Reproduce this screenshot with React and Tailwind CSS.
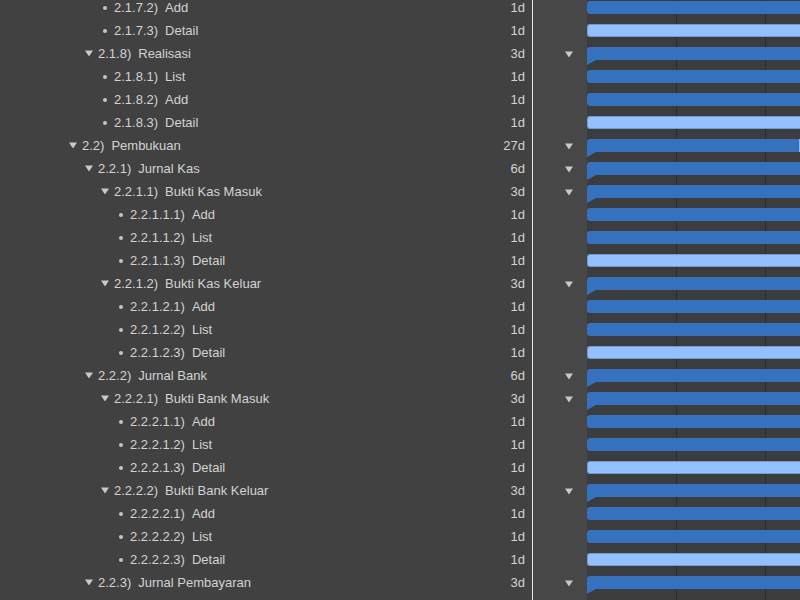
import React from 'react';

const rows = [
  { d: 3, kind: 'leaf', num: '2.1.7.2)', name: 'Add', dur: '1d' },
  { d: 3, kind: 'leaf', num: '2.1.7.3)', name: 'Detail', dur: '1d', light: true },
  { d: 2, kind: 'group', num: '2.1.8)', name: 'Realisasi', dur: '3d' },
  { d: 3, kind: 'leaf', num: '2.1.8.1)', name: 'List', dur: '1d' },
  { d: 3, kind: 'leaf', num: '2.1.8.2)', name: 'Add', dur: '1d' },
  { d: 3, kind: 'leaf', num: '2.1.8.3)', name: 'Detail', dur: '1d', light: true },
  { d: 1, kind: 'group', num: '2.2)', name: 'Pembukuan', dur: '27d', end: true },
  { d: 2, kind: 'group', num: '2.2.1)', name: 'Jurnal Kas', dur: '6d' },
  { d: 3, kind: 'group', num: '2.2.1.1)', name: 'Bukti Kas Masuk', dur: '3d' },
  { d: 4, kind: 'leaf', num: '2.2.1.1.1)', name: 'Add', dur: '1d' },
  { d: 4, kind: 'leaf', num: '2.2.1.1.2)', name: 'List', dur: '1d' },
  { d: 4, kind: 'leaf', num: '2.2.1.1.3)', name: 'Detail', dur: '1d', light: true },
  { d: 3, kind: 'group', num: '2.2.1.2)', name: 'Bukti Kas Keluar', dur: '3d' },
  { d: 4, kind: 'leaf', num: '2.2.1.2.1)', name: 'Add', dur: '1d' },
  { d: 4, kind: 'leaf', num: '2.2.1.2.2)', name: 'List', dur: '1d' },
  { d: 4, kind: 'leaf', num: '2.2.1.2.3)', name: 'Detail', dur: '1d', light: true },
  { d: 2, kind: 'group', num: '2.2.2)', name: 'Jurnal Bank', dur: '6d' },
  { d: 3, kind: 'group', num: '2.2.2.1)', name: 'Bukti Bank Masuk', dur: '3d' },
  { d: 4, kind: 'leaf', num: '2.2.2.1.1)', name: 'Add', dur: '1d' },
  { d: 4, kind: 'leaf', num: '2.2.2.1.2)', name: 'List', dur: '1d' },
  { d: 4, kind: 'leaf', num: '2.2.2.1.3)', name: 'Detail', dur: '1d', light: true },
  { d: 3, kind: 'group', num: '2.2.2.2)', name: 'Bukti Bank Keluar', dur: '3d' },
  { d: 4, kind: 'leaf', num: '2.2.2.2.1)', name: 'Add', dur: '1d' },
  { d: 4, kind: 'leaf', num: '2.2.2.2.2)', name: 'List', dur: '1d' },
  { d: 4, kind: 'leaf', num: '2.2.2.2.3)', name: 'Detail', dur: '1d', light: true },
  { d: 2, kind: 'group', num: '2.2.3)', name: 'Jurnal Pembayaran', dur: '3d' },
];

const Tri = () => (
  <svg width="8" height="7" viewBox="0 0 8 7" className="block">
    <path d="M0 0.5 L8 0.5 L4 6.5 Z" fill="#c9c9c9" />
  </svg>
);

const Marker = ({ kind }) => (
  <span className="flex w-[9px] items-center justify-center">
    {kind === 'group' ? <Tri /> : <span className="block h-[4px] w-[4px] rounded-full bg-[#c4c4c4]" />}
  </span>
);

const Bar = ({ row }) => {
  if (row.kind === 'group') {
    return (
      <div className="pt-[6px]">
        <div className="flex h-[13px]">
          <div className="h-full w-full rounded-tl-[3px] bg-[#3472c0]" />
          {row.end && <div className="h-full w-[1px] shrink-0 bg-[#8fb8ea]" />}
        </div>
        <svg width="9" height="5" viewBox="0 0 9 5" className="block">
          <path d="M0 0 L9 0 L0 5 Z" fill="#3472c0" />
        </svg>
      </div>
    );
  }
  return (
    <div className="pt-[6px]">
      <div
        className={
          row.light
            ? 'h-[13px] rounded-l-[3px] border border-r-0 border-[#6f9ad6] bg-[#93c0ff]'
            : 'h-[13px] rounded-l-[3px] bg-[#3472c0]'
        }
      />
    </div>
  );
};

export default function App() {
  return (
    <div
      className="flex h-[600px] w-[800px] overflow-hidden bg-[#414141] text-[13px] text-[#d3d3d3]"
      style={{ fontFamily: '"Liberation Sans", Arial, Helvetica, sans-serif' }}
    >
      {/* outline */}
      <div className="-mt-[4px] flex w-[532px] shrink-0 flex-col">
        {rows.map((r, i) => (
          <div key={i} className="flex h-[23px] shrink-0 items-center pr-[7px]">
            <div
              className={
                r.d === 1
                  ? 'flex flex-1 items-center pl-[68px]'
                  : r.d === 2
                  ? 'flex flex-1 items-center pl-[84px]'
                  : r.d === 3
                  ? 'flex flex-1 items-center pl-[100px]'
                  : 'flex flex-1 items-center pl-[116px]'
              }
            >
              <Marker kind={r.kind} />
              <span className="ml-[5px] whitespace-nowrap">{r.num}</span>
              <span className="ml-[7px] whitespace-nowrap">{r.name}</span>
            </div>
            <span className="text-right">{r.dur}</span>
          </div>
        ))}
      </div>

      <div className="w-[1px] shrink-0 bg-[#e6e6e6]" />

      {/* collapse column */}
      <div className="-mt-[3px] flex w-[54px] shrink-0 flex-col bg-[#474747]">
        {rows.map((r, i) => (
          <div key={i} className="flex h-[23px] shrink-0 items-center pl-[32px]">
            {r.kind === 'group' && <Tri />}
          </div>
        ))}
      </div>

      {/* chart */}
      <div className="relative flex-1 bg-[#3c3c3c]">
        <div className="absolute inset-y-0 left-[89px] w-[1px] bg-[#2c2c2c]" />
        <div className="absolute inset-y-0 left-[178px] w-[1px] bg-[#2c2c2c]" />
        <div className="relative -mt-[5px] flex flex-col">
          {rows.map((r, i) => (
            <div key={i} className="h-[23px] shrink-0">
              <Bar row={r} />
            </div>
          ))}
        </div>
      </div>
    </div>
  );
}
